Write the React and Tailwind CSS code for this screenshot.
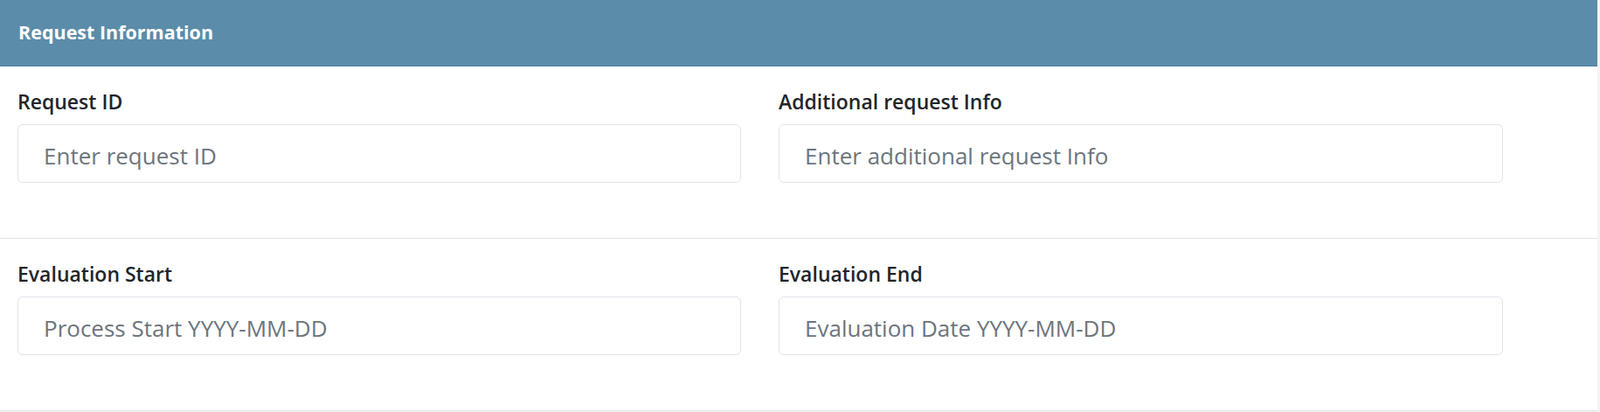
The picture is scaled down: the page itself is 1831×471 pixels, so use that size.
import React from 'react';

const FONT = { fontFamily: '"Open Sans", "Noto Sans", sans-serif' };

function Field({ label, placeholder, className = '' }) {
  return (
    <div className={className}>
      <label className="block text-[23px] leading-[32px] font-semibold text-[#212529] mb-[10px]">{label}</label>
      <input
        type="text"
        placeholder={placeholder}
        className="block w-full h-[67px] pl-[29px] pt-[4px] pb-0 text-[26px] text-[#212529] placeholder:text-[#6c757d] bg-white border border-[#e2e3ea] rounded-[6px] outline-none"
      />
    </div>
  );
}

function Section({ children }) {
  return (
    <div className="flex px-[20px] pt-[24px] pb-[63px] border-b border-[#e2e3ea]">
      {children}
    </div>
  );
}

export default function App() {
  return (
    <div className="w-[1831px] h-[471px] bg-[#f4f4f6] overflow-hidden" style={FONT}>
      <div className="w-[1828px] bg-white">
        <div className="h-[76px] flex items-center px-[21px] bg-[#5b8ca9] border-b border-[#4f7f9c]">
          <span className="text-[21.5px] font-bold text-white">Request Information</span>
        </div>

        <Section>
          <Field className="w-[828px]" label="Request ID" placeholder="Enter request ID" />
          <Field className="w-[829px] ml-[43px]" label="Additional request Info" placeholder="Enter additional request Info" />
        </Section>

        <Section>
          <Field className="w-[828px]" label="Evaluation Start" placeholder="Process Start YYYY-MM-DD" />
          <Field className="w-[829px] ml-[43px]" label="Evaluation End" placeholder="Evaluation Date YYYY-MM-DD" />
        </Section>
      </div>
    </div>
  );
}
